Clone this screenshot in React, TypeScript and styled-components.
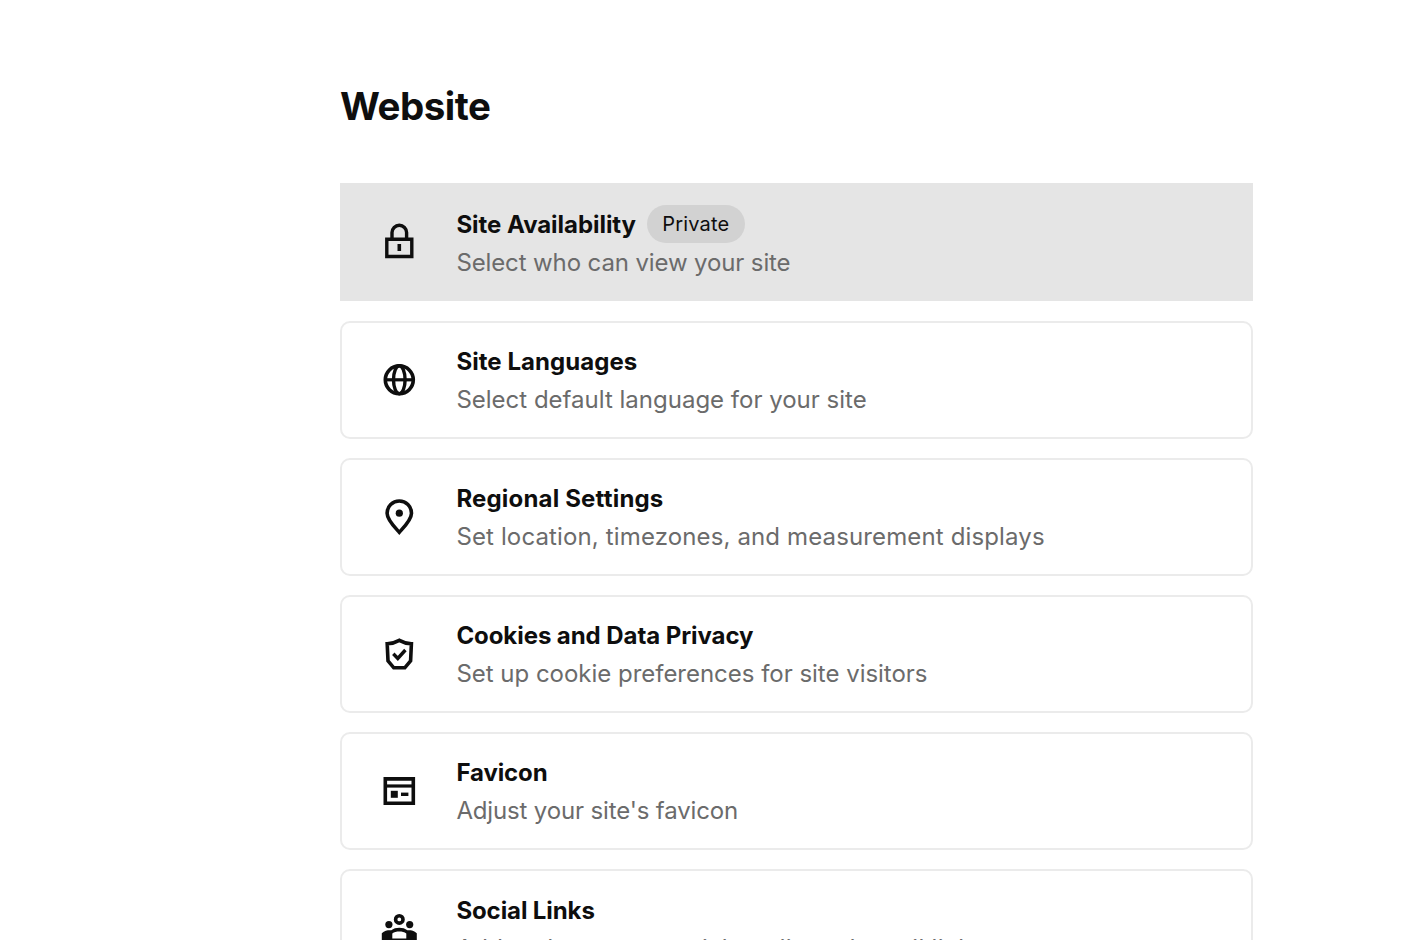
import React from "react";
import styled, { createGlobalStyle } from "styled-components";

const GlobalStyle = createGlobalStyle`
  * { box-sizing: border-box; }
  html, body { margin: 0; background: #fff; }
  body { overflow: hidden; font-family: Inter, "Liberation Sans", sans-serif; color: #0e0e0e; }
`;

const Page = styled.main`
  height: 940px;
  overflow: hidden;
  padding: 82px 157px 0 340px;
`;

const Heading = styled.h1`
  margin: 0 0 53.4px;
  font-size: 38.5px;
  line-height: 49px;
  height: 48px;
  font-weight: 700;
  letter-spacing: -0.5px;
`;

const List = styled.div`
  display: flex;
  flex-direction: column;
  gap: 19.15px;
`;

const Row = styled.div<{ $active?: boolean }>`
  display: flex;
  align-items: center;
  flex: none;
  height: 118px;
  padding-left: 40px;
  border: 2px solid ${(p) => (p.$active ? "#e5e5e5" : "#ebebeb")};
  border-radius: ${(p) => (p.$active ? "0" : "10px")};
  background: ${(p) => (p.$active ? "#e5e5e5" : "#fff")};
`;

const IconBox = styled.span`
  display: flex;
  flex: none;
  width: 34px;
  height: 40px;
  margin-right: 40.4px;
  svg { display: block; overflow: visible; }
`;

const Texts = styled.div`
  display: flex;
  flex-direction: column;
  padding-top: 3px;
`;

const TitleLine = styled.div`
  display: flex;
  align-items: center;
  height: 38px;
  gap: 11px;
`;

const Title = styled.span<{ $tracking: number }>`
  font-size: 24px;
  line-height: 38px;
  font-weight: 650;
  letter-spacing: ${(p) => p.$tracking}px;
  white-space: nowrap;
`;

const Description = styled.span<{ $tracking: number }>`
  font-size: 24px;
  line-height: 38px;
  color: #6b6b6b;
  letter-spacing: ${(p) => p.$tracking}px;
  white-space: nowrap;
`;

const Badge = styled.span`
  height: 38px;
  margin-top: -2px;
  padding: 0 15.3px;
  border-radius: 19px;
  background: #d2d2d2;
  font-size: 20px;
  line-height: 38px;
  letter-spacing: 0.15px;
`;

const Svg = ({ children }: { children: React.ReactNode }) => (
  <svg width="34" height="40" viewBox="0 0 34 40" fill="none" stroke="#0e0e0e" strokeWidth="3.4">
    {children}
  </svg>
);

const LockIcon = () => (
  <Svg>
    <path d="M4.8 17.2H29.8V34.5H4.8Z M10 17.2V10.6A7.3 7.3 0 0 1 24.6 10.6V17.2" />
    <path d="M17.3 22V29" strokeWidth="3.6" />
  </Svg>
);
const GlobeIcon = () => (
  <Svg>
    <circle cx="17.3" cy="19.8" r="14" strokeWidth="3.6" />
    <ellipse cx="17.3" cy="19.8" rx="5.8" ry="14" />
    <path d="M3.3 19.8H31.3" strokeWidth="3.2" />
  </Svg>
);
const PinIcon = () => (
  <Svg>
    <path d="M17.3 35.3C12.8 30.4 5.1 22.8 5.1 16.2A12.2 12.2 0 0 1 29.5 16.2C29.5 22.8 21.8 30.4 17.3 35.3Z" strokeWidth="3.6" />
    <circle cx="17.3" cy="16.2" r="3.6" fill="#0e0e0e" stroke="none" />
  </Svg>
);
const ShieldIcon = () => (
  <Svg>
    <path d="M17.3 6.4C13.5 8.6 9.5 9.6 5.2 9.8L6 26.8L11.8 33.8H22.8L28.6 26.8L29.4 9.8C25.1 9.6 21.1 8.6 17.3 6.4Z" strokeWidth="3.6" />
    <path d="M11.3 19.8L15.8 24.4L23.4 16" strokeWidth="3.4" />
  </Svg>
);
const BrowserIcon = () => (
  <Svg>
    <path d="M3.3 7.9H31.3V32.3H3.3Z" strokeWidth="3.6" />
    <path d="M3.3 15H31.3" strokeWidth="3.2" />
    <path d="M8.8 19.8H15.8V26.8H8.8Z" fill="#0e0e0e" stroke="none" />
    <path d="M19 23.3H26.4" />
  </Svg>
);
const PeopleIcon = () => (
  <Svg>
    <circle cx="17.3" cy="11.4" r="3.7" strokeWidth="3.6" />
    <circle cx="6.9" cy="16.6" r="3.6" fill="#0e0e0e" stroke="none" />
    <circle cx="27.7" cy="16.6" r="3.6" fill="#0e0e0e" stroke="none" />
    <path fillRule="evenodd" fill="#0e0e0e" stroke="none" d="M-.2 37V25.2C2.8 22.2 6.3 22.2 9.3 22.3C13.3 19 21.3 19 25.3 22.3C28.3 22.2 31.8 22.2 34.8 25.2V37Z M10.3 25.4V30.5H24.3V25.4C20.8 22.8 13.8 22.8 10.3 25.4Z" />
  </Svg>
);

const items = [
  { title: "Site Availability", titleTracking: -0.05, text: "Select who can view your site", textTracking: -0.12, icon: <LockIcon />, badge: "Private", active: true },
  { title: "Site Languages", titleTracking: 0.05, text: "Select default language for your site", textTracking: 0, icon: <GlobeIcon /> },
  { title: "Regional Settings", titleTracking: 0.18, text: "Set location, timezones, and measurement displays", textTracking: 0.135, icon: <PinIcon /> },
  { title: "Cookies and Data Privacy", titleTracking: -0.07, text: "Set up cookie preferences for site visitors", textTracking: -0.02, icon: <ShieldIcon /> },
  { title: "Favicon", titleTracking: -0.1, text: "Adjust your site's favicon", textTracking: -0.15, icon: <BrowserIcon /> },
  { title: "Social Links", titleTracking: -0.1, text: "Add and manage social media and email links", textTracking: 0.3, icon: <PeopleIcon /> },
];

export default function App() {
  return (
    <Page>
      <GlobalStyle />
      <Heading>Website</Heading>
      <List>
        {items.map((it) => (
          <Row key={it.title} $active={it.active}>
            <IconBox>{it.icon}</IconBox>
            <Texts>
              <TitleLine>
                <Title $tracking={it.titleTracking}>{it.title}</Title>
                {it.badge && <Badge>{it.badge}</Badge>}
              </TitleLine>
              <Description $tracking={it.textTracking}>{it.text}</Description>
            </Texts>
          </Row>
        ))}
      </List>
    </Page>
  );
}
